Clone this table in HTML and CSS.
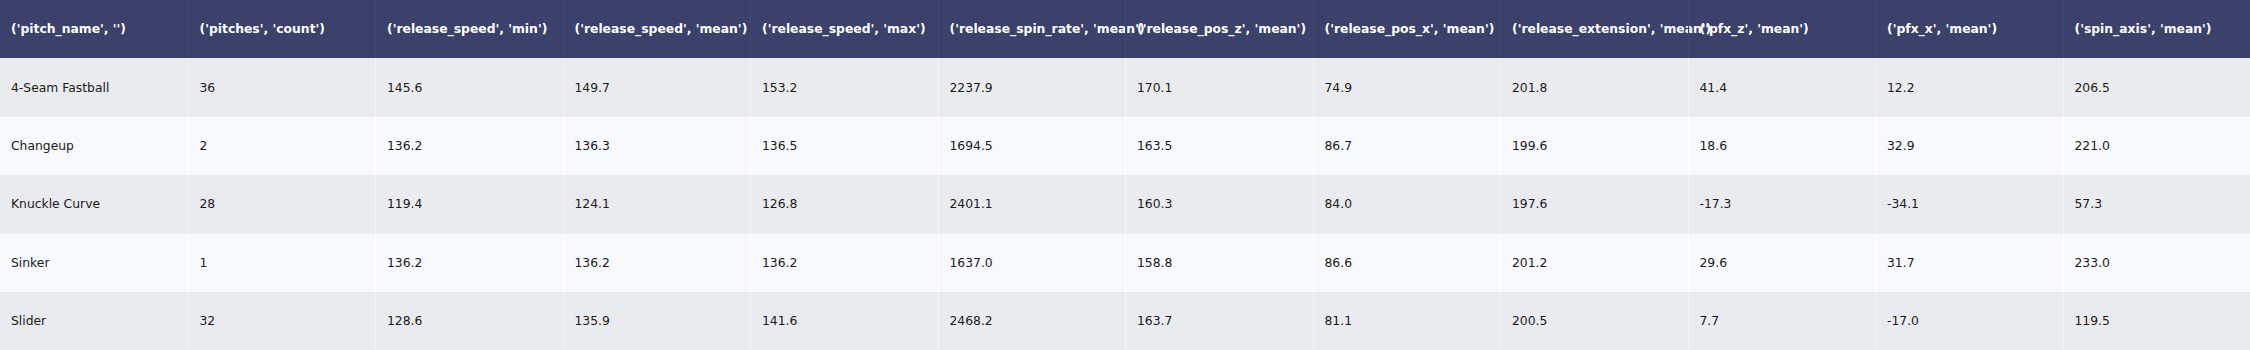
FILE: index.html
```html
<!DOCTYPE html>
<html>
<head>
<meta charset="utf-8">
<link rel="stylesheet" href="styles.css">
</head>
<body>
<div class="table">
  <div class="row head">
    <div class="cell">('pitch_name', '')</div>
    <div class="cell">('pitches', 'count')</div>
    <div class="cell">('release_speed', 'min')</div>
    <div class="cell">('release_speed', 'mean')</div>
    <div class="cell">('release_speed', 'max')</div>
    <div class="cell">('release_spin_rate', 'mean')</div>
    <div class="cell">('release_pos_z', 'mean')</div>
    <div class="cell">('release_pos_x', 'mean')</div>
    <div class="cell">('release_extension', 'mean')</div>
    <div class="cell">('pfx_z', 'mean')</div>
    <div class="cell">('pfx_x', 'mean')</div>
    <div class="cell">('spin_axis', 'mean')</div>
  </div>
  <div class="row odd">
    <div class="cell">4-Seam Fastball</div><div class="cell">36</div><div class="cell">145.6</div><div class="cell">149.7</div><div class="cell">153.2</div><div class="cell">2237.9</div><div class="cell">170.1</div><div class="cell">74.9</div><div class="cell">201.8</div><div class="cell">41.4</div><div class="cell">12.2</div><div class="cell">206.5</div>
  </div>
  <div class="row even">
    <div class="cell">Changeup</div><div class="cell">2</div><div class="cell">136.2</div><div class="cell">136.3</div><div class="cell">136.5</div><div class="cell">1694.5</div><div class="cell">163.5</div><div class="cell">86.7</div><div class="cell">199.6</div><div class="cell">18.6</div><div class="cell">32.9</div><div class="cell">221.0</div>
  </div>
  <div class="row odd">
    <div class="cell">Knuckle Curve</div><div class="cell">28</div><div class="cell">119.4</div><div class="cell">124.1</div><div class="cell">126.8</div><div class="cell">2401.1</div><div class="cell">160.3</div><div class="cell">84.0</div><div class="cell">197.6</div><div class="cell">-17.3</div><div class="cell">-34.1</div><div class="cell">57.3</div>
  </div>
  <div class="row even">
    <div class="cell">Sinker</div><div class="cell">1</div><div class="cell">136.2</div><div class="cell">136.2</div><div class="cell">136.2</div><div class="cell">1637.0</div><div class="cell">158.8</div><div class="cell">86.6</div><div class="cell">201.2</div><div class="cell">29.6</div><div class="cell">31.7</div><div class="cell">233.0</div>
  </div>
  <div class="row odd">
    <div class="cell">Slider</div><div class="cell">32</div><div class="cell">128.6</div><div class="cell">135.9</div><div class="cell">141.6</div><div class="cell">2468.2</div><div class="cell">163.7</div><div class="cell">81.1</div><div class="cell">200.5</div><div class="cell">7.7</div><div class="cell">-17.0</div><div class="cell">119.5</div>
  </div>
</div>
</body>
</html>
```

FILE: styles.css
```css
html, body {
  margin: 0;
  padding: 0;
  background: #ffffff;
}
.table {
  width: 2250px;
  display: flex;
  flex-direction: column;
  font-family: "DejaVu Sans", Verdana, sans-serif;
  font-size: 12.35px;
  color: #1a1a1a;
}
.row {
  display: grid;
  grid-template-columns: repeat(12, 1fr);
  height: 58.4px;
}
.cell {
  display: flex;
  align-items: center;
  padding: 0 11px;
  white-space: nowrap;
  overflow: visible;
  min-width: 0;
  border-left: 1px solid #f2f3f6;
}
.cell:first-child {
  border-left: none;
}
.head {
  background: #3b416b;
  color: #ffffff;
  font-weight: bold;
}
.head .cell {
  border-left-color: #41476f;
}
.odd {
  background: #eaebee;
}
.even {
  background: #f7f9fc;
}
.even .cell {
  border-left-color: #ffffff;
}
```
